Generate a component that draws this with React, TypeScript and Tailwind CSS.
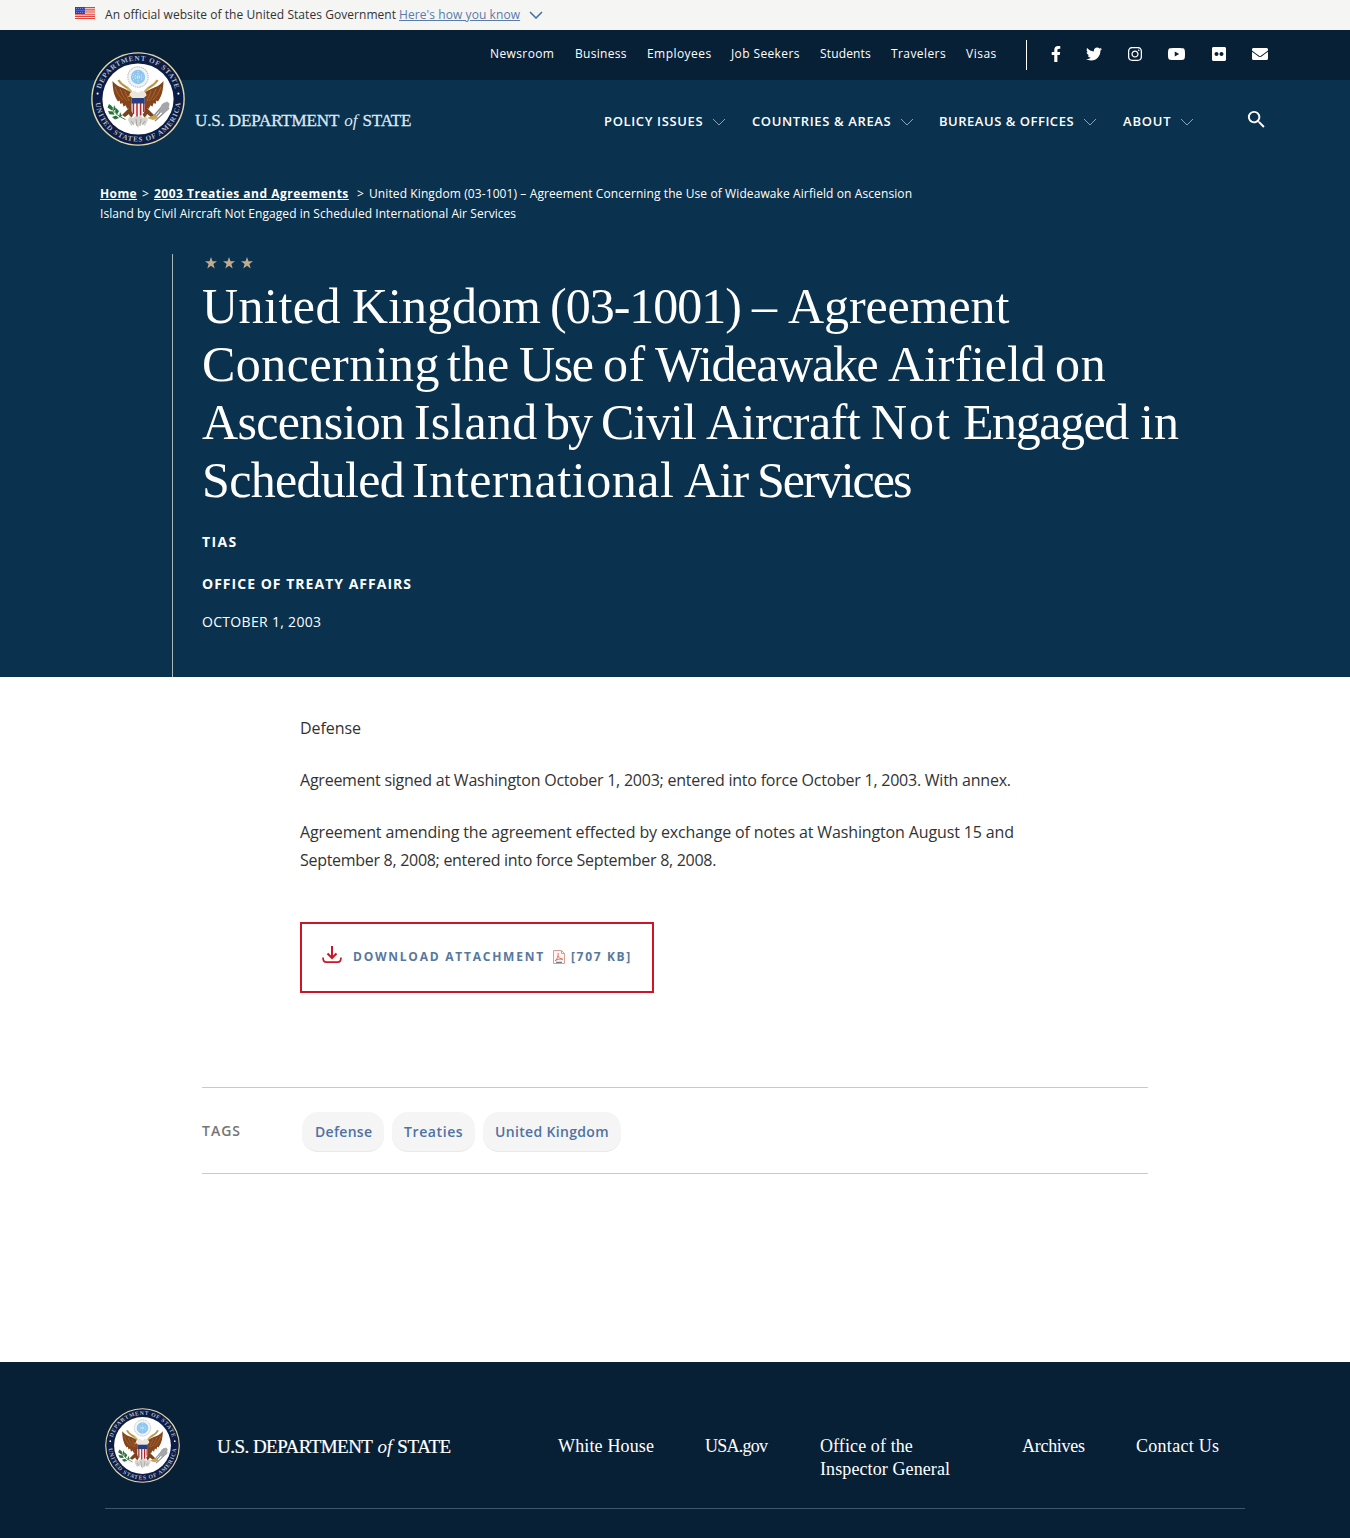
import React from "react";
import { FaFacebookF, FaTwitter, FaInstagram, FaYoutube, FaFlickr, FaEnvelope } from "react-icons/fa";
import { MdSearch } from "react-icons/md";

const serif = "font-['Liberation_Serif',serif]";

function Seal({ id, className }: { id: string; className: string }) {
  return (
    <svg viewBox="0 0 94 94" className={className} role="img" aria-label="Department of State seal">
      <defs>
        <path id={`${id}-top`} d="M8.6 47 A38.4 38.4 0 0 1 85.4 47" />
        <path id={`${id}-bottom`} d="M4.4 47 A42.6 42.6 0 0 0 89.6 47" />
      </defs>
      <circle cx="47" cy="47" r="46.8" fill="#e3d9ab" />
      <circle cx="47" cy="47" r="45.4" fill="#0b1c45" />
      <circle cx="47" cy="47" r="35.6" fill="#ffffff" />
      <g fill="#b4bac4" fontFamily="Liberation Serif, serif" fontSize="7.2" fontWeight="bold">
        <text>
          <textPath href={`#${id}-top`} startOffset="50%" textAnchor="middle" textLength="100">DEPARTMENT OF STATE</textPath>
        </text>
        <text>
          <textPath href={`#${id}-bottom`} startOffset="50%" textAnchor="middle" textLength="126">UNITED STATES OF AMERICA</textPath>
        </text>
      </g>
      <circle cx="6.6" cy="41.6" r="1.1" fill="#f1f1e8" />
      <circle cx="87.4" cy="41.6" r="1.1" fill="#f1f1e8" />
      <circle cx="47" cy="25" r="10.2" fill="#f2f4f5" stroke="#b9bec2" strokeWidth="1.1" strokeDasharray="1.4 0.8" />
      <circle cx="47" cy="25" r="7.2" fill="#8cc6ee" />
      <path d="M47 19v12M42 22l10 6M42 28l10-6M41 25h12" stroke="#d9edf9" strokeWidth="0.9" strokeDasharray="1.2 1.1" />
      <path d="M27.5 28c2 4 6 6 9 8s4 4 5 7M66.5 28c-2 4-6 6-9 8s-4 4-5 7" fill="none" stroke="#cbae62" strokeWidth="2.6" />
      <path d="M27.5 28c2 4 6 6 9 8M66.5 28c-2 4-6 6-9 8" fill="none" stroke="#8a6a2f" strokeWidth="0.6" />
      <path d="M21.5 29c.2 8 1.400 15 5.500 20.500l1.600-1 .8 3.600 2-1.200 1.200 3.800 2-1.400 1.600 3.500 5.300-1V42c-2-2.500-5-4-8.500-5.500S25 33.500 21.500 29z" fill="#85451c" />
      <path d="M72.500 29c-.2 8-1.400 15-5.500 20.500l-1.600-1-.8 3.600-2-1.200-1.200 3.800-2-1.400-1.600 3.500-5.300-1V42c2-2.500 5-4 8.500-5.500S69 33.500 72.500 29z" fill="#85451c" />
      <path d="M24 35c2 6 5 10 8 13M29 37c2 5 4 9 7 12M34 39c1 4 3 7 4 10M70 35c-2 6-5 10-8 13M65 37c-2 5-4 9-7 12M60 39c-1 4-3 7-4 10" fill="none" stroke="#b06f38" strokeWidth="0.8" />
      <path d="M40 54l-9 9 3 2 4-3 2 5 3-6zM54 54l9 9-3 2-4-3-2 5-3-6z" fill="#7a421d" />
      <path d="M37 68l2-4 3 2 5-4 5 4 3-2 2 4-3 6-4-3-3 5-3-5-4 3z" fill="#d5d3cf" />
      <path d="M40 69l3 4M45 67l1 7M50 67l-1 7M54 69l-3 4" stroke="#8f8b86" strokeWidth="0.7" />
      <path d="M38.500 43.500c0-3.500 3-5 6-4.500l2.500 2 2.500-2c3-.5 6 1 6 4.500l-4 3.500h-9z" fill="#ece7dc" />
      <path d="M39 43l-2.500 1.500 3 .8z" fill="#d9a441" />
      <path d="M40.500 46h13.200v12c0 4-4.500 6-6.600 7-2.100-1-6.600-3-6.600-7z" fill="#f5f2f2" />
      <path d="M42.400 51v11M46 51v13.500M49.600 51v12.500M52.800 51v9" stroke="#b3242f" strokeWidth="1.500" />
      <path d="M40.500 46h13.200v5.500H40.500z" fill="#263f80" />
      <path d="M19.500 53c1.500 6 7 11 15 14.500" fill="none" stroke="#4c6a38" strokeWidth="0.9" />
      <path d="M18 52l4 3.500-1 3-4.500-3zM23 53l2 4-3 2.500zM17 59l5 .5 1.500 3.200-5-.5zM25 56l3 3-2 3.500-2-3zM21 65l4-1.500 3 2.500-4 1.500zM29 60l2 4-3 1.500z" fill="#23733b" />
      <path d="M63 67l14-16M61 66l13-15M64 69l14-13" stroke="#8d8e91" strokeWidth="1.400" />
      <path d="M71 52l5-2.500 2.500 2-1 6-5 4-5-2z" fill="#a4a6a9" />
      <path d="M56 66l9-3 2 3-5 2z" fill="#c9a44f" />
    </svg>
  );
}

function Flag() {
  return (
    <svg viewBox="0 0 20 12" className="h-3 w-5">
      <rect width="20" height="12" fill="#ffe9dc" />
      <path d="M0 .6h20M0 2.800h20M0 5h20M0 7.200h20M0 9.400h20M0 11.500h20" stroke="#e0453d" strokeWidth="1.150" />
      <rect width="10" height="7" fill="#2f44b8" />
      <path d="M1 1.500h8.500M1.500 3.500h8.500M1 5.500h8.500" stroke="#8b98de" strokeWidth="0.8" strokeDasharray="1 1" />
    </svg>
  );
}

function Chevron({ className }: { className: string }) {
  return (
    <svg viewBox="0 0 14 8" className={className} fill="none" stroke="currentColor">
      <path d="M1 1l6 6 6-6" />
    </svg>
  );
}

function Stars() {
  return (
    <svg viewBox="0 0 50 12" className="h-3 w-[50px]" fill="#c3ab8b">
      {[0, 18, 36].map((x) => (
        <path key={x} transform={`translate(${x} 0)`} d="M6 0l1.500 4.300H12L8.400 7l1.300 4.500L6 8.800 2.300 11.500 3.600 7 0 4.300h4.500z" />
      ))}
    </svg>
  );
}

const utilityLinks = [
  { label: "Newsroom", box: "w-[85px] tracking-[0.39px]" },
  { label: "Business", box: "w-[72px] tracking-[0.3px]" },
  { label: "Employees", box: "w-[84px] tracking-[0.45px]" },
  { label: "Job Seekers", box: "w-[89px] tracking-[0.38px]" },
  { label: "Students", box: "w-[71px] tracking-[0.15px]" },
  { label: "Travelers", box: "w-[75px] tracking-[0.42px]" },
  { label: "Visas", box: "w-[60px] tracking-[0.5px]" },
];

const mainLinks = [
  { label: "POLICY ISSUES", box: "w-[148px] tracking-[0.64px]" },
  { label: "COUNTRIES & AREAS", box: "w-[187px] tracking-[0.63px]" },
  { label: "BUREAUS & OFFICES", box: "w-[184px] tracking-[0.52px]" },
  { label: "ABOUT", box: "w-[125px] tracking-[0.8px]" },
];

const titleLines = [
  [
    { text: "United", box: "w-[150px] tracking-[0.49px]" },
    { text: "Kingdom", box: "w-[198px] tracking-[0px]" },
    { text: "(03-1001)", box: "w-[202px] tracking-[-1px]" },
    { text: "–", box: "w-[36px]" },
    { text: "Agreement", box: "tracking-[-0.1px]" },
  ],
  [
    { text: "Concerning", box: "w-[245px] tracking-[0.47px]" },
    { text: "the", box: "w-[72px] tracking-[0.6px]" },
    { text: "Use", box: "w-[84px] tracking-[-1.4px]" },
    { text: "of", box: "w-[52px] tracking-[0.6px]" },
    { text: "Wideawake", box: "w-[233px] tracking-[-1.27px]" },
    { text: "Airfield", box: "w-[167px] tracking-[-0.07px]" },
    { text: "on", box: "tracking-[0.8px]" },
  ],
  [
    { text: "Ascension", box: "w-[212px] tracking-[-0.66px]" },
    { text: "Island", box: "w-[131px] tracking-[0.2px]" },
    { text: "by", box: "w-[56px] tracking-[-2px]" },
    { text: "Civil", box: "w-[105px] tracking-[-1.04px]" },
    { text: "Aircraft", box: "w-[165px] tracking-[-0.5px]" },
    { text: "Not", box: "w-[92px] tracking-[2px]" },
    { text: "Engaged", box: "w-[177px] tracking-[-1.45px]" },
    { text: "in", box: "tracking-[0px]" },
  ],
  [
    { text: "Scheduled", box: "w-[210px] tracking-[-0.68px]" },
    { text: "International", box: "w-[272px] tracking-[0.53px]" },
    { text: "Air", box: "w-[73px] tracking-[-0.8px]" },
    { text: "Services", box: "tracking-[-2px]" },
  ],
];

const footerLinks = [
  { lines: ["White House"], box: "w-[147px] tracking-[0.15px]" },
  { lines: ["USA.gov"], box: "w-[115px] tracking-[-0.75px]" },
  { lines: ["Office of the", "Inspector General"], box: "w-[202px] tracking-[0.1px]" },
  { lines: ["Archives"], box: "w-[114px] tracking-[-0.28px]" },
  { lines: ["Contact Us"], box: "w-[109px] tracking-[0.28px]" },
];

export default function App() {
  return (
    <div className="flex h-[1538px] w-[1350px] flex-col overflow-hidden bg-white font-['Open_Sans',sans-serif] text-[#333333]">
      <div className="flex h-[30px] shrink-0 items-start bg-[#f5f5f4] pl-[75px] text-xs leading-[30px]">
        <span className="pt-[7px]"><Flag /></span>
        <span className="ml-[10px] w-[294px] whitespace-nowrap tracking-[0.05px]">An official website of the United States Government</span>
        <a className="w-[130px] tracking-[0.08px] text-[#5b7ba8] underline">Here's how you know</a>
        <Chevron className="mt-[11px] h-2 w-[14px] stroke-[1.6] text-[#4773aa]" />
      </div>

      <header className="flex h-[647px] shrink-0 flex-col bg-[#0a314d] text-white">
        <div className="flex h-[50px] shrink-0 items-center bg-[#082036] pl-[490px] text-xs">
          {utilityLinks.map((l) => (
            <a key={l.label} className={`${l.box} pb-[3px] whitespace-nowrap`}>{l.label}</a>
          ))}
          <span className="h-[30px] w-px bg-white" />
          <div className="flex items-center pb-[2px]">
            <FaFacebookF className="ml-[20px] h-4 w-[18px]" />
            <FaTwitter className="ml-[21px] size-4" />
            <FaInstagram className="ml-[25px] size-4" />
            <FaYoutube className="ml-[24px] h-4 w-[19px]" />
            <FaFlickr className="ml-[25px] size-4" />
            <FaEnvelope className="ml-[25px] size-4" />
          </div>
        </div>

        <div className="flex h-[84px] shrink-0 pl-[91px]">
          <Seal id="head" className="-mt-[28px] size-[94px]" />
          <div className={`mt-[29px] ml-[10px] flex h-[24px] w-[409px] gap-[5px] text-[17px] leading-[24px] text-[#dce9f5] ${serif}`}>
            <span className="tracking-[-0.13px] [-webkit-text-stroke:0.3px]">U.S. DEPARTMENT</span>
            <i>of</i>
            <span className="tracking-[-0.16px] [-webkit-text-stroke:0.3px]">STATE</span>
          </div>
          <nav className="mt-[29px] flex h-6 text-[13px] leading-[24px] font-semibold">
            {mainLinks.map((l) => (
              <a key={l.label} className={`${l.box} flex items-center gap-[9px] whitespace-nowrap`}>
                {l.label}
                <Chevron className="mt-px h-2 w-[14px] text-[#8ba3b8]" />
              </a>
            ))}
          </nav>
          <MdSearch className="mt-[28px] -ml-[3px] size-[23px]" />
        </div>

        <div className="mt-[20px] ml-[100px] h-[40px] shrink-0 text-xs leading-[20px]">
          <div className="flex whitespace-nowrap">
            <a className="w-[42px] font-bold tracking-[0.4px] underline">Home</a>
            <span className="w-[12px]">&gt;</span>
            <a className="w-[203px] font-bold tracking-[0.5px]"><span className="underline">2003 Treaties and Agreements</span></a>
            <span className="w-[12px]">&gt;</span>
            <span className="tracking-[0.1px]">United Kingdom (03-1001) – Agreement Concerning the Use of Wideawake Airfield on Ascension</span>
          </div>
          <div className="tracking-[0.055px]">Island by Civil Aircraft Not Engaged in Scheduled International Air Services</div>
        </div>

        <div className="mt-[30px] ml-[172px] flex flex-1 flex-col border-l border-[#a9b7b7] pl-[29px] text-sm">
          <div className="mt-[3px] ml-[3px] h-[20px]"><Stars /></div>
          <h1 className={`text-[50px] leading-[58px] ${serif}`}>
            {titleLines.map((words, i) => (
              <span key={i} className="flex whitespace-pre">
                {words.map((w) => (
                  <span key={w.text} className={`shrink-0 ${w.box}`}>{w.text + " "}</span>
                ))}
              </span>
            ))}
          </h1>
          <p className="mt-[23px] font-bold leading-[20px] tracking-[1.4px]">TIAS</p>
          <p className="mt-[22px] font-bold leading-[20px] tracking-[1.02px]">OFFICE OF TREATY AFFAIRS</p>
          <p className="mt-[18px] leading-[20px] tracking-[0.31px]">OCTOBER 1, 2003</p>
        </div>
      </header>

      <main className="flex h-[685px] shrink-0 flex-col">
        <div className="mt-[37px] ml-[300px] flex flex-col gap-6 text-base leading-[28px] whitespace-nowrap">
          <p className="tracking-[-0.06px]">Defense</p>
          <p className="tracking-[-0.238px]">Agreement signed at Washington October 1, 2003; entered into force October 1, 2003. With annex.</p>
          <p>
            <span className="block tracking-[-0.134px]">Agreement amending the agreement effected by exchange of notes at Washington August 15 and</span>
            <span className="block tracking-[-0.29px]">September 8, 2008; entered into force September 8, 2008.</span>
          </p>
        </div>

        <a className="mt-[48px] ml-[300px] flex h-[71px] w-[354px] items-center border-2 border-[#cc1526] pb-[2px] pl-[20px] text-xs font-bold text-[#56789f]">
          <svg viewBox="0 0 20 18" className="mb-[3px] h-[18px] w-5" fill="none" stroke="#cc1526" strokeWidth="2">
            <path d="M10 0v11.500M5.500 7.500l4.500 4.500 4.500-4.500" />
            <path d="M1 11.500c0 3.500 1 4.700 3.500 4.700h11c2.500 0 3.500-1.200 3.500-4.700" strokeWidth="1.700" />
          </svg>
          <span className="ml-[11px] w-[200px] tracking-[1.76px]">DOWNLOAD ATTACHMENT</span>
          <svg viewBox="0 0 12 14" className="h-[14px] w-3" fill="#fff6f3" stroke="#dd9c91">
            <path d="M.5.5h8l3 3v10H.5z" />
            <path d="M8.500.5v3h3" fill="none" />
            <path d="M2 11c2-1.500 3.500-5 3.200-8M5.200 6c.8 2 2 3 4.800 3.200M2.500 10.500c2-1.300 4.500-1.800 7-1.300" fill="none" stroke="#c7584a" strokeWidth="0.8" />
            <path d="M3 12.300h6" stroke="#47679b" />
          </svg>
          <span className="ml-[6px] tracking-[1.65px]">[707 KB]</span>
        </a>

        <div className="mt-[94px] ml-[202px] flex h-[87px] w-[946px] border-y border-[#c9c9c9] pt-[24px] text-sm font-semibold">
          <span className="w-[100px] leading-[38px] tracking-[0.99px] text-[#757575]">TAGS</span>
          <div className="flex h-[40px] gap-[8px] text-[#4f72a3]">
            <a className="w-[82px] rounded-[16px] border-b border-[#e9e9e9] bg-[#f5f5f5] pl-[13px] leading-[40px] tracking-[0.3px]">Defense</a>
            <a className="w-[83px] rounded-[16px] border-b border-[#e9e9e9] bg-[#f5f5f5] pl-[12px] leading-[40px] tracking-[0.6px]">Treaties</a>
            <a className="w-[138px] rounded-[16px] border-b border-[#e9e9e9] bg-[#f5f5f5] pl-[12px] leading-[40px] tracking-[0.33px]">United Kingdom</a>
          </div>
        </div>
      </main>

      <footer className={`flex h-[176px] shrink-0 flex-col bg-[#082036] text-white ${serif}`}>
        <div className="mx-[105px] flex h-[147px] shrink-0 border-b border-[#3d5669]">
          <Seal id="foot" className="mt-[46px] size-[75px]" />
          <div className="mt-[73px] ml-[37px] flex h-6 w-[341px] gap-[5px] text-[19px] leading-[24px]">
            <span className="tracking-[-0.53px] [-webkit-text-stroke:0.2px]">U.S. DEPARTMENT</span>
            <i>of</i>
            <span className="tracking-[-0.37px] [-webkit-text-stroke:0.2px]">STATE</span>
          </div>
          <nav className="mt-[73px] flex text-[18px] leading-[23px]">
            {footerLinks.map((l) => (
              <a key={l.lines[0]} className={`${l.box} whitespace-nowrap`}>
                {l.lines.map((t) => (
                  <span key={t} className="block">{t}</span>
                ))}
              </a>
            ))}
          </nav>
        </div>
      </footer>
    </div>
  );
}
